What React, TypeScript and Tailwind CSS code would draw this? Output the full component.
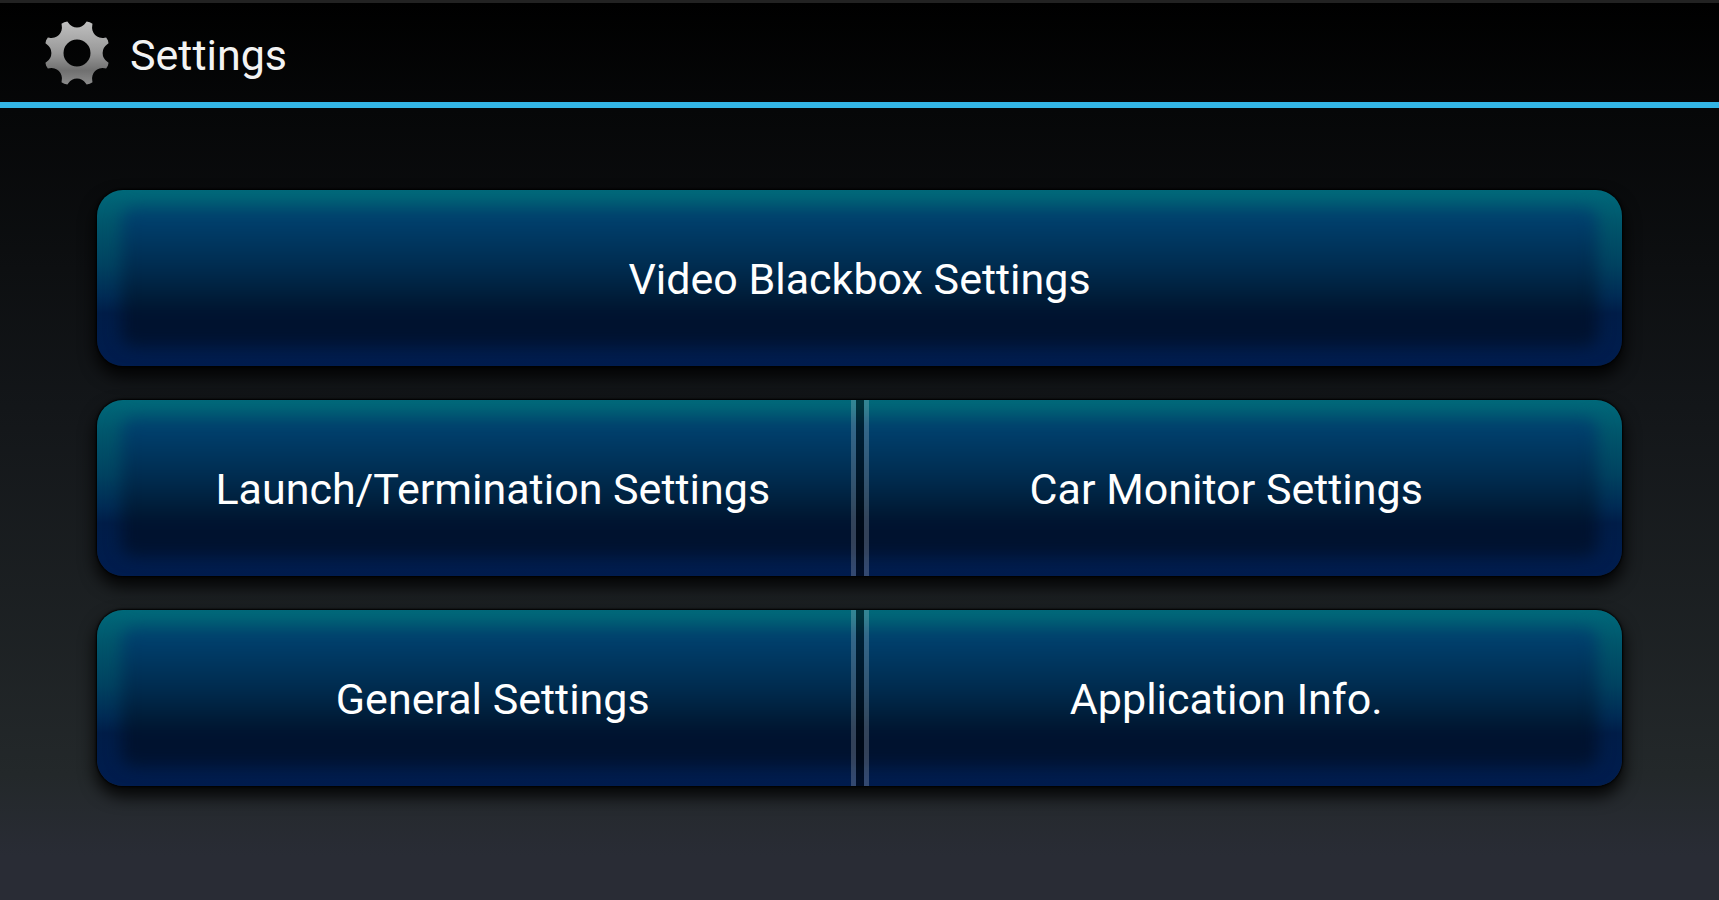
import { ReactNode } from "react"

const rows = [
  ["Video Blackbox Settings"],
  ["Launch/Termination Settings", "Car Monitor Settings"],
  ["General Settings", "Application Info."],
]

// one tooth, repeated every 45 degrees around the centre
const gearPath = (() => {
  const point = (radius: number, degrees: number) => {
    const a = (degrees * Math.PI) / 180
    return `${(32 + radius * Math.sin(a)).toFixed(2)} ${(32 - radius * Math.cos(a)).toFixed(2)}`
  }
  let d = `M${point(33, 17)}`
  for (let i = 0; i < 8; i++) {
    const c = 22.5 + i * 45
    d += `L${point(33.4, c)}L${point(33, c + 5.5)}L${point(31.5, c + 6.5)}`
    d += `A10.4 10.4 0 0 0 ${point(31.5, c + 38.5)}L${point(33, c + 39.5)}`
  }
  return d + "Z"
})()

function GearIcon() {
  return (
    <svg viewBox="0 0 64 64" className="size-16 shrink-0" aria-hidden="true">
      <defs>
        <linearGradient id="gear-fill" x1="0" y1="0" x2="0" y2="1">
          <stop offset="0" stopColor="#c0c0c0" />
          <stop offset="0.5" stopColor="#989898" />
          <stop offset="0.78" stopColor="#707070" />
          <stop offset="1" stopColor="#8c8c8c" />
        </linearGradient>
      </defs>
      <path
        d={`${gearPath}M32 18.5a13.5 13.5 0 1 0 0 27a13.5 13.5 0 1 0 0-27Z`}
        fill="url(#gear-fill)"
        fillRule="evenodd"
      />
    </svg>
  )
}

function Divider() {
  return (
    <div className="flex w-[18px] shrink-0" aria-hidden="true">
      <span className="w-[5px] bg-white/20" />
      <span className="flex-1 bg-black/50" />
      <span className="w-[5px] bg-white/20" />
    </div>
  )
}

function Panel({ children }: { children: ReactNode }) {
  return (
    <div className="h-44 rounded-[26px] shadow-[0_0_2px_1px_#000,0_9px_16px_2px_rgba(0,0,0,0.85)]">
      <div className="relative flex h-full overflow-hidden rounded-[26px] bg-[linear-gradient(#00697a,#00556b_20%,#004361_42%,#002c55_60%,#001d48_70%,#001c4e)]">
        {/* darker centre, blurred so that the rim seems to glow */}
        <div className="absolute inset-x-[24px] top-[18px] bottom-[20px] rounded-[14px] bg-[linear-gradient(#004473,#002c50_42%,#001a34_69%,#00122f_76%,#00122f)] blur-[8px]" />
        <div className="relative flex w-full px-[38px]">{children}</div>
      </div>
    </div>
  )
}

export default function App() {
  return (
    <div className="flex min-h-screen flex-col border-t-3 border-[#222222] bg-[linear-gradient(#000000,#060708_12%,#131619_45%,#23282a_86%,#292c35_95%,#292c35)] font-[Roboto,sans-serif] text-white">
      <header className="flex h-[105px] items-center gap-[21px] border-b-6 border-[#33b5e5] pl-[45px]">
        <GearIcon />
        <h1 className="pt-1 text-[43px] leading-[54px] text-[#f3f3f3]">Settings</h1>
      </header>
      <main className="flex flex-col gap-[34px] px-[97px] pt-[82px] pb-16">
        {rows.map((row) => (
          <Panel key={row[0]}>
            {row.map((label, i) => (
              <div key={label} className="contents">
                {i > 0 && <Divider />}
                <button type="button" className="min-w-0 flex-1 cursor-pointer pt-[2px] text-[43px] leading-[54px]">
                  {label}
                </button>
              </div>
            ))}
          </Panel>
        ))}
      </main>
    </div>
  )
}
